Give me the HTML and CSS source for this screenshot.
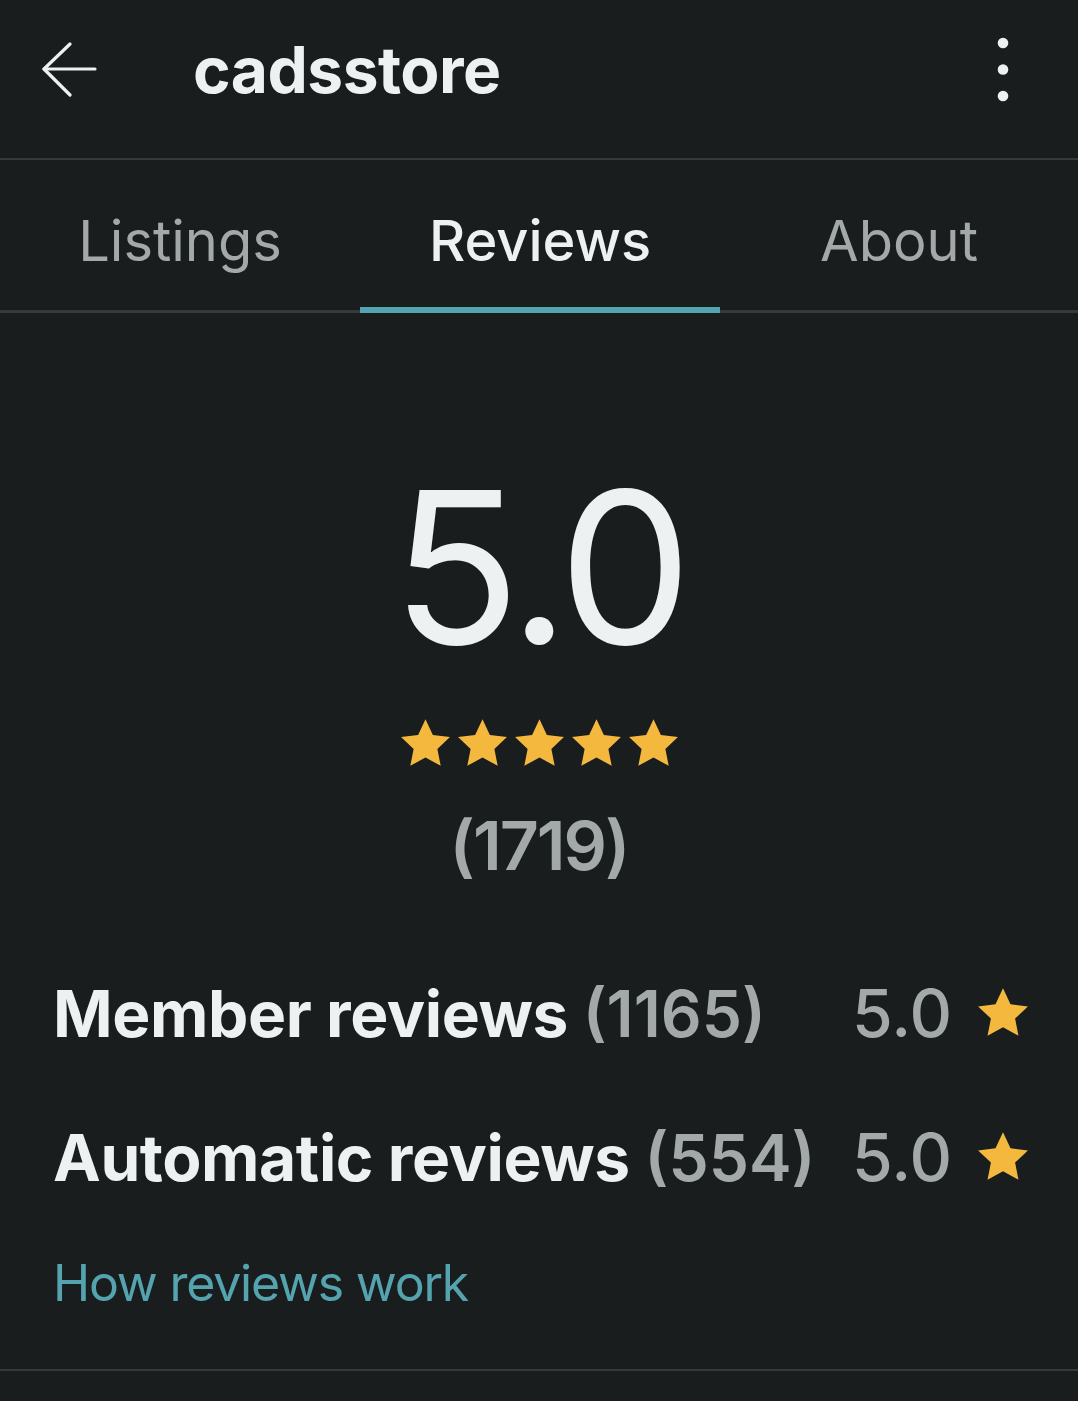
FILE: index.html
```html
<!DOCTYPE html>
<html lang="en">
<head>
<meta charset="utf-8">
<title>cadsstore - Reviews</title>
<link rel="stylesheet" href="styles.css">
</head>
<body>
<div class="app">
  <header class="topbar">
    <button class="icon-btn back" aria-label="Back">
      <svg width="56" height="56" viewBox="0 0 56 56" fill="none" stroke="#eef1f1" stroke-width="3.2" stroke-linecap="round" stroke-linejoin="round">
        <path d="M2 27 H53"/>
        <path d="M28 2 L2 27 L28 53"/>
      </svg>
    </button>
    <h1 class="title">cadsstore</h1>
    <button class="icon-btn more" aria-label="More options">
      <svg width="16" height="70" viewBox="0 0 16 70" fill="#eef1f1">
        <circle cx="8" cy="8" r="5.3"/>
        <circle cx="8" cy="34.5" r="5.3"/>
        <circle cx="8" cy="61" r="5.3"/>
      </svg>
    </button>
  </header>

  <nav class="tabs">
    <div class="tab">Listings</div>
    <div class="tab active">Reviews</div>
    <div class="tab">About</div>
  </nav>

  <section class="summary">
    <div class="score">5.0</div>
    <div class="stars">
      <svg class="star" viewBox="0 0 24 24"><path d="M12 1.8l3.1 6.6 7.2.9-5.3 5 1.4 7.1L12 17.9l-6.4 3.5 1.4-7.1-5.3-5 7.2-.9z"/></svg>
      <svg class="star" viewBox="0 0 24 24"><path d="M12 1.8l3.1 6.6 7.2.9-5.3 5 1.4 7.1L12 17.9l-6.4 3.5 1.4-7.1-5.3-5 7.2-.9z"/></svg>
      <svg class="star" viewBox="0 0 24 24"><path d="M12 1.8l3.1 6.6 7.2.9-5.3 5 1.4 7.1L12 17.9l-6.4 3.5 1.4-7.1-5.3-5 7.2-.9z"/></svg>
      <svg class="star" viewBox="0 0 24 24"><path d="M12 1.8l3.1 6.6 7.2.9-5.3 5 1.4 7.1L12 17.9l-6.4 3.5 1.4-7.1-5.3-5 7.2-.9z"/></svg>
      <svg class="star" viewBox="0 0 24 24"><path d="M12 1.8l3.1 6.6 7.2.9-5.3 5 1.4 7.1L12 17.9l-6.4 3.5 1.4-7.1-5.3-5 7.2-.9z"/></svg>
    </div>
    <div class="count">(1719)</div>
  </section>

  <section class="breakdown">
    <div class="row">
      <div class="label">Member reviews <span class="num">(1165)</span></div>
      <div class="rating">5.0 <svg class="star small" viewBox="0 0 24 24"><path d="M12 1.8l3.1 6.6 7.2.9-5.3 5 1.4 7.1L12 17.9l-6.4 3.5 1.4-7.1-5.3-5 7.2-.9z"/></svg></div>
    </div>
    <div class="row">
      <div class="label">Automatic reviews <span class="num">(554)</span></div>
      <div class="rating">5.0 <svg class="star small" viewBox="0 0 24 24"><path d="M12 1.8l3.1 6.6 7.2.9-5.3 5 1.4 7.1L12 17.9l-6.4 3.5 1.4-7.1-5.3-5 7.2-.9z"/></svg></div>
    </div>
    <a class="how" href="#">How reviews work</a>
  </section>
  <div class="bottom-rule"></div>
</div>
</body>
</html>
```

FILE: styles.css
```css
* { box-sizing: border-box; }
html, body {
  margin: 0;
  padding: 0;
  background: #191d1e;
}
body {
  font-family: Inter, "Noto Sans", sans-serif;
  color: #eef1f1;
}
.app {
  width: 1078px;
  min-height: 1401px;
  background: #191d1e;
}
.topbar {
  height: 160px;
  display: flex;
  align-items: center;
  padding: 0 0 20px 42px;
  border-bottom: 2px solid #363a3b;
}
.icon-btn {
  background: none;
  border: 0;
  padding: 0;
  display: flex;
  align-items: center;
  justify-content: center;
}
.back { width: 56px; height: 56px; margin-top: 2px; }
.title {
  margin: 0 0 0 95px;
  font-size: 64px;
  font-weight: 700;
  letter-spacing: -0.5px;
  color: #eef1f1;
  flex: 1;
}
.more { width: 16px; height: 70px; margin-right: 67px; margin-top: 2px; }

.tabs {
  display: grid;
  grid-template-columns: 360px 360px 1fr;
  height: 153px;
  border-bottom: 3px solid #363a3b;
}
.tab {
  display: flex;
  align-items: center;
  justify-content: center;
  font-size: 56px;
  font-weight: 400;
  color: #a3a8a9;
  padding-top: 12px;
  position: relative;
}
.tab.active {
  color: #eef1f1;
  font-weight: 500;
}
.tab.active::after {
  content: "";
  position: absolute;
  left: 0; right: 0; bottom: -3px;
  height: 6px;
  background: #53a3b0;
}

.summary {
  display: flex;
  flex-direction: column;
  align-items: center;
  padding-top: 148px;
}
.score {
  font-size: 212px;
  line-height: 1;
  font-weight: 400;
  letter-spacing: -6px;
  color: #eef1f1;
}
.stars {
  display: flex;
  gap: 0;
  margin-top: 42px;
}
.star {
  width: 57px;
  height: 57px;
  fill: #f5b83e;
}
.count {
  margin-top: 32px;
  font-size: 68px;
  font-weight: 600;
  letter-spacing: -2px;
  color: #a3a8a9;
}

.breakdown {
  padding: 55px 46px 0 53px;
}
.row {
  display: grid;
  grid-template-columns: 1fr auto;
  align-items: center;
  height: 144px;
}
.label {
  font-size: 64px;
  font-weight: 700;
  letter-spacing: -0.4px;
  color: #eef1f1;
  white-space: nowrap;
}
.num {
  color: #a3a8a9;
  font-weight: 600;
  letter-spacing: 0;
}
.rating {
  display: flex;
  align-items: center;
  gap: 22px;
  font-size: 66px;
  font-weight: 500;
  color: #a3a8a9;
}
.star.small { width: 58px; height: 58px; }
.how {
  display: block;
  margin-top: 24px;
  font-size: 50px;
  color: #54a3ae;
  text-decoration: none;
  letter-spacing: -1.2px;
}
.bottom-rule {
  margin-top: 56px;
  border-top: 2px solid #363a3b;
}
```
